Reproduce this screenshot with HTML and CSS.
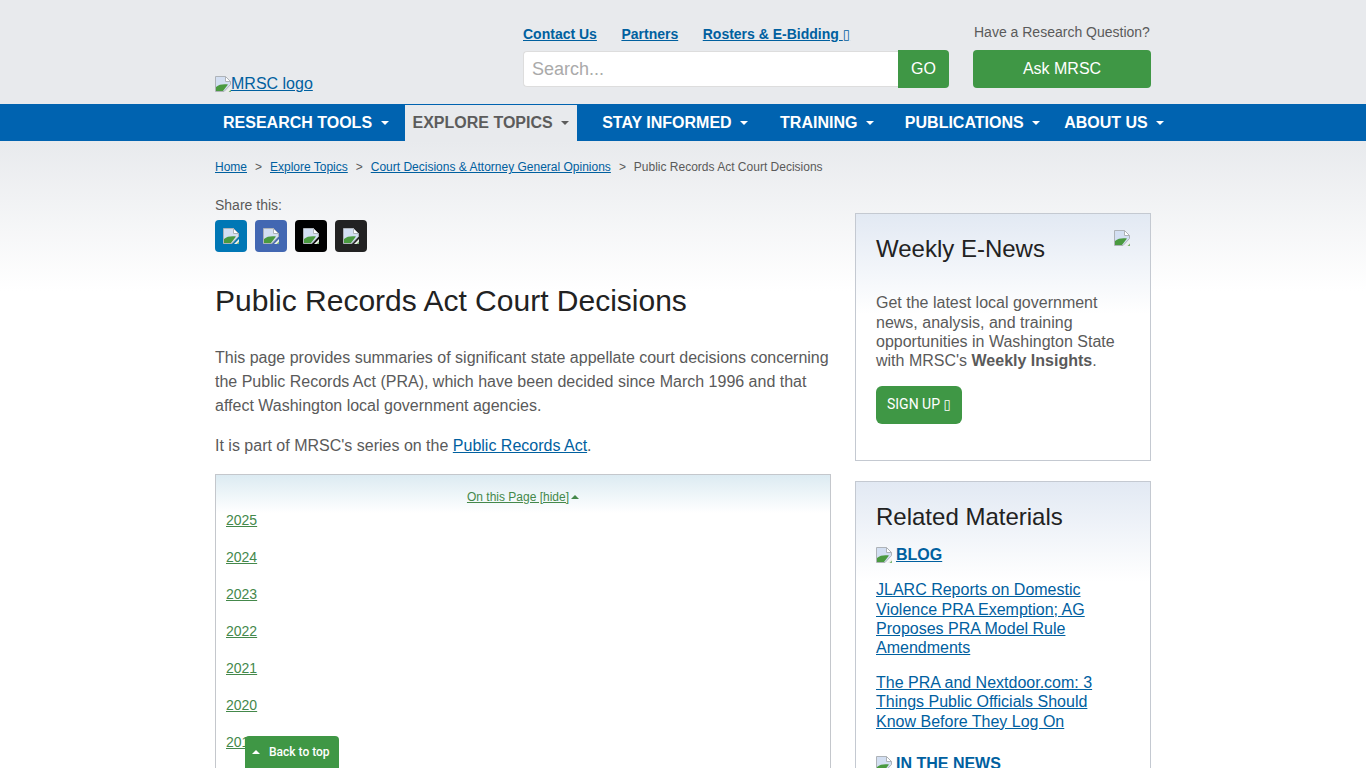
FILE: index.html
```html
<!DOCTYPE html>
<html lang="en">
<head>
  <meta charset="UTF-8" />
  <meta name="viewport" content="width=device-width, initial-scale=1.0"/>
  <title>Public Records Act Court Decisions</title>
  <link rel="stylesheet" href="styles.css">
</head>
<body>
  <svg class="sprites" width="0" height="0">
    <symbol id="broken" viewBox="0 0 16 16">
      <path d="M0.5 0.5H10.5L15.5 5.5V8.5L9 15.5H0.5Z" fill="#d3dff2" stroke="#aeb3b8"/>
      <path d="M10.5 0.5V5.5H15.5Z" fill="#fff" stroke="#aeb3b8"/>
      <path d="M1 15V11C4 8.5 8 8 13 8.5L8 15Z" fill="#4a9a40"/>
      <path d="M16 11V16H11Z" fill="#eef1ec"/>
      <path d="M13.5 16H16V13.5Z" fill="#7fb574"/>
    </symbol>
  </svg>

  <header class="top">
    <div class="wrap top-row">
      <a class="logo" href="#"><svg class="broken-img"><use href="#broken"/></svg>MRSC logo</a>
      <div class="search-col">
        <div class="util-links">
          <a href="#">Contact Us</a>
          <a href="#">Partners</a>
          <a href="#">Rosters &amp; E-Bidding <span class="tofu">&#9647;</span></a>
        </div>
        <form class="search">
          <input type="text" placeholder="Search...">
          <button type="button">GO</button>
        </form>
      </div>
      <div class="ask-col">
        <p>Have a Research Question?</p>
        <a class="ask-btn" href="#">Ask MRSC</a>
      </div>
    </div>
  </header>

  <nav class="mainnav">
    <ul class="wrap">
      <li><a href="#">RESEARCH TOOLS <i class="caret"></i></a></li>
      <li class="near active"><a href="#">EXPLORE TOPICS <i class="caret"></i></a></li>
      <li class="far"><a href="#">STAY INFORMED <i class="caret"></i></a></li>
      <li class="mid"><a href="#">TRAINING <i class="caret"></i></a></li>
      <li class="tight"><a href="#">PUBLICATIONS <i class="caret"></i></a></li>
      <li class="near"><a href="#">ABOUT US <i class="caret"></i></a></li>
    </ul>
  </nav>

  <div class="page">
    <div class="wrap">
      <div class="crumbs">
        <a href="#">Home</a><span class="sep">&gt;</span>
        <a href="#">Explore Topics</a><span class="sep">&gt;</span>
        <a href="#">Court Decisions &amp; Attorney General Opinions</a><span class="sep">&gt;</span>
        <span>Public Records Act Court Decisions</span>
      </div>

      <div class="columns">
        <main class="content">
          <div class="share-label">Share this:</div>
          <div class="share">
            <a class="linkedin" href="#"><svg class="broken-img"><use href="#broken"/></svg></a>
            <a class="facebook" href="#"><svg class="broken-img"><use href="#broken"/></svg></a>
            <a class="twitter" href="#"><svg class="broken-img"><use href="#broken"/></svg></a>
            <a class="email" href="#"><svg class="broken-img"><use href="#broken"/></svg></a>
          </div>

          <h1>Public Records Act Court Decisions</h1>
          <p class="lead">This page provides summaries of significant state appellate court decisions concerning the Public Records Act (PRA), which have been decided since March 1996 and that affect Washington local government agencies.</p>
          <p>It is part of MRSC's series on the <a href="#">Public Records Act</a>.</p>

          <div class="toc">
            <div class="toc-head"><a href="#">On this Page [hide]</a><i class="caret-up"></i></div>
            <ul>
              <li><a href="#">2025</a></li>
              <li><a href="#">2024</a></li>
              <li><a href="#">2023</a></li>
              <li><a href="#">2022</a></li>
              <li><a href="#">2021</a></li>
              <li><a href="#">2020</a></li>
              <li><a href="#">2019</a></li>
            </ul>
          </div>
        </main>

        <aside class="sidebar">
          <section class="card news-card">
            <svg class="broken-img card-icon"><use href="#broken"/></svg>
            <h2>Weekly E-News</h2>
            <p>Get the latest local government news, analysis, and training opportunities in Washington State with MRSC's <strong>Weekly Insights</strong>.</p>
            <a class="signup" href="#">SIGN UP <span class="tofu">&#9647;</span></a>
          </section>

          <section class="card">
            <h2>Related Materials</h2>
            <h3><svg class="broken-img"><use href="#broken"/></svg><a href="#">BLOG</a></h3>
            <p><a href="#">JLARC Reports on Domestic Violence PRA Exemption; AG Proposes PRA Model Rule Amendments</a></p>
            <p><a href="#">The PRA and Nextdoor.com: 3 Things Public Officials Should Know Before They Log On</a></p>
            <h3 class="news-head"><svg class="broken-img"><use href="#broken"/></svg><a href="#">IN THE NEWS</a></h3>
          </section>
        </aside>
      </div>
    </div>
  </div>

  <a class="back-top" href="#"><i class="caret-up"></i>Back to top</a>
</body>
</html>
```

FILE: styles.css
```css
html, body {
  margin: 0;
  padding: 0;
  height: 100%;
  overflow: hidden;
  background: #fff;
  color: #5a5a5a;
  font-family: "Liberation Sans", Arial, sans-serif;
  font-size: 16px;
}

a {
  color: #00609f;
}

ul {
  list-style: none;
  margin: 0;
  padding: 0;
}

.sprites {
  display: block;
  height: 0;
}

.wrap {
  width: 936px;
  margin: 0 auto;
}

.broken-img {
  width: 16px;
  height: 16px;
  vertical-align: -3px;
}

.tofu {
  font-family: "DejaVu Sans", sans-serif;
  font-size: 0.95em;
  font-weight: normal;
  line-height: 1;
}

/* header */
.top {
  height: 104px;
  background: #e8eaed;
}

.top-row {
  display: flex;
  height: 104px;
}

.logo {
  width: 308px;
  align-self: flex-end;
  margin-bottom: 11px;
  line-height: 18px;
}

.search-col {
  width: 426px;
  padding-top: 26px;
}

.util-links {
  display: flex;
  gap: 24.5px;
  height: 24px;
  font-size: 14px;
  font-weight: bold;
  line-height: 16px;
}

.search {
  display: flex;
  height: 38px;
}

.search input {
  width: 375px;
  height: 36px;
  margin-top: 1px;
  box-sizing: border-box;
  border: 1px solid #ddd;
  border-right: none;
  border-radius: 4px 0 0 4px;
  padding: 1px 8px 0;
  font-family: inherit;
  font-size: 18px;
  outline: none;
}

.search input::placeholder {
  color: #aaa;
}

.search button {
  width: 51px;
  border: none;
  border-radius: 0 4px 4px 0;
  background: #3f9745;
  color: #fff;
  font-family: inherit;
  font-size: 16px;
}

.ask-col {
  width: 178px;
  margin-left: 24px;
  padding-top: 24px;
}

.ask-col p {
  margin: 0 0 10px 1px;
  font-size: 14px;
  line-height: 16px;
}

.ask-btn {
  display: block;
  height: 38px;
  border-radius: 4px;
  background: #3f9745;
  color: #fff;
  line-height: 38px;
  text-align: center;
  text-decoration: none;
}

/* main nav */
.mainnav {
  height: 37px;
  background: #0063b0;
}

.mainnav ul {
  display: flex;
  height: 37px;
}

.mainnav li.near {
  margin-left: 8px;
}

.mainnav li.far {
  margin-left: 17px;
}

.mainnav li.mid {
  margin-left: 16px;
}

.mainnav li.tight {
  margin-left: 15px;
}

.mainnav a {
  display: block;
  padding: 0 8px;
  color: #fff;
  font-size: 16px;
  font-weight: bold;
  line-height: 37px;
  text-decoration: none;
  white-space: nowrap;
}

.mainnav .active {
  margin-top: 1px;
  background: #e8eaed;
}

.mainnav .active a {
  color: #5c5c5c;
  line-height: 35px;
}

.caret {
  display: inline-block;
  width: 0;
  height: 0;
  margin-left: 4px;
  border: 4px solid transparent;
  border-top-color: currentColor;
  border-bottom: none;
  vertical-align: 3px;
}

.caret-up {
  display: inline-block;
  width: 0;
  height: 0;
  border: 4px solid transparent;
  border-bottom-color: currentColor;
  border-top: none;
  vertical-align: 2px;
}

/* page body */
.page {
  background: linear-gradient(#e8eaed, #fff 150px);
  padding-top: 19px;
}

.crumbs {
  height: 14px;
  font-size: 12px;
  line-height: 14px;
}

.sep {
  margin: 0 4.6px 0 8px;
}

.columns {
  display: flex;
  justify-content: space-between;
  margin-top: 18px;
}

.content {
  width: 616px;
}

.share-label {
  margin-top: 5px;
  font-size: 14px;
  line-height: 16px;
}

.share {
  display: flex;
  gap: 8px;
  margin-top: 7px;
}

.share a {
  display: flex;
  align-items: center;
  justify-content: center;
  width: 32px;
  height: 32px;
  border-radius: 4px;
}

.share .linkedin { background: #0077b5; }
.share .facebook { background: #4267b2; }
.share .twitter { background: #000; }
.share .email { background: #222; }

h1 {
  margin: 31px 0 0;
  color: #222;
  font-size: 30px;
  font-weight: normal;
  line-height: 36px;
}

.content p {
  margin: 0 0 16px;
  line-height: 24px;
}

.content .lead {
  margin-top: 27px;
}

.toc {
  border: 1px solid #c4c7cc;
  padding: 0 10px;
  background: linear-gradient(#dcebf2, #fff 38px);
}

.toc-head {
  padding-top: 15px;
  color: #44884b;
  font-size: 12px;
  line-height: 14px;
  text-align: center;
}

.toc-head .caret-up {
  margin-left: 2px;
}

.toc a {
  color: #44884b;
}

.toc li {
  height: 37px;
  font-size: 14px;
  line-height: 16px;
}

.toc ul {
  margin-top: 8px;
}

/* sidebar */
.sidebar {
  width: 296px;
  padding-top: 21px;
}

.card {
  position: relative;
  box-sizing: border-box;
  border: 1px solid #c4c9d1;
  padding: 20px 20px 0;
  margin-bottom: 20px;
  background: linear-gradient(#e2e9f3, #fff 100px);
}

.news-card {
  height: 248px;
}

.card-icon {
  position: absolute;
  top: 16px;
  right: 20px;
}

.card h2 {
  margin: 0;
  color: #222;
  font-size: 24px;
  font-weight: normal;
  line-height: 29px;
}

.card p {
  margin: 0 0 16px;
  line-height: 19.2px;
}

.news-card p {
  margin: 30.4px 0 15.6px;
}

.card h3 {
  margin: 14px 0 16.4px;
  font-size: 16px;
  line-height: 19px;
}

.card h3 a {
  margin-left: 4px;
}

.card .news-head {
  margin-top: 23.4px;
}

.signup {
  display: inline-block;
  height: 38px;
  padding: 0 11px;
  border-radius: 6px;
  background: #3f9745;
  color: #fff;
  font-family: Roboto, sans-serif;
  font-size: 14px;
  line-height: 36px;
  text-decoration: none;
}

.back-top {
  position: fixed;
  left: 245px;
  top: 736px;
  box-sizing: border-box;
  width: 94px;
  height: 32px;
  padding-left: 7px;
  border-radius: 4px 4px 0 0;
  background: #3f9745;
  color: #fff;
  font-family: Roboto, sans-serif;
  font-size: 12px;
  font-weight: 500;
  line-height: 32px;
  text-decoration: none;
}

.back-top .caret-up {
  margin-right: 9px;
}
```
